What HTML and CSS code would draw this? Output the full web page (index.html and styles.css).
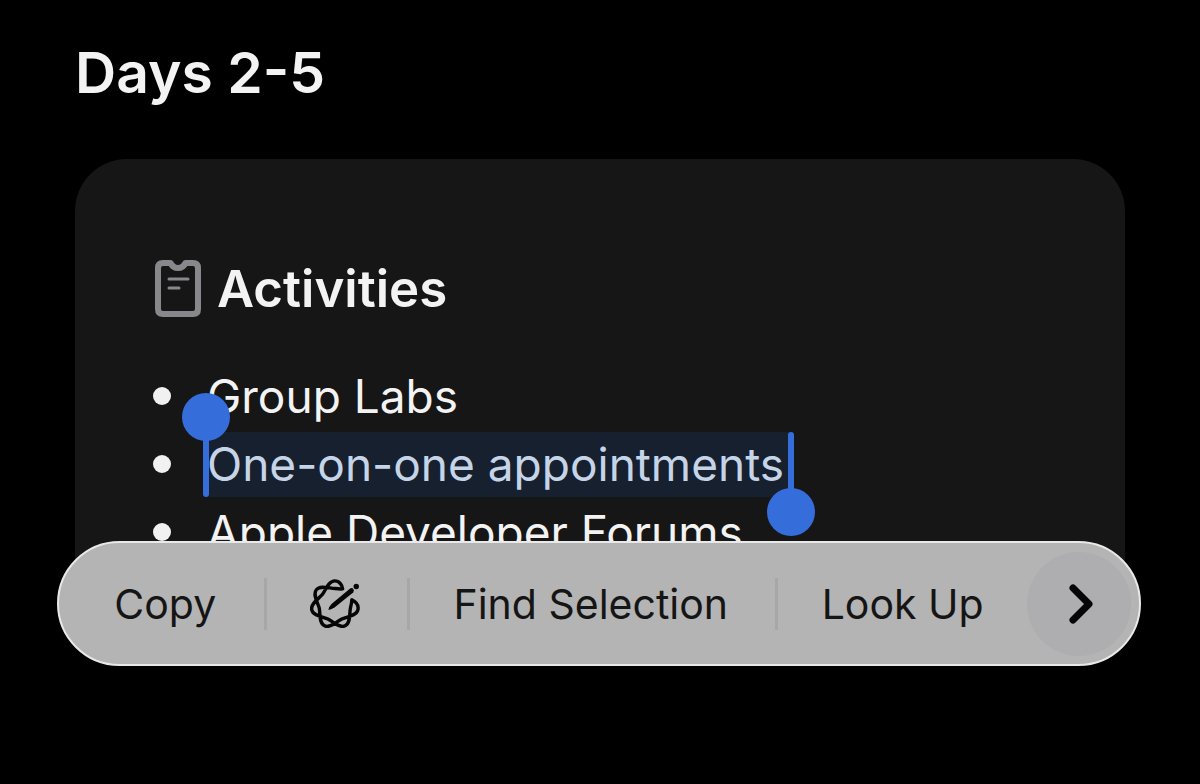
FILE: index.html
```html
<!DOCTYPE html>
<html lang="en">
<head>
<meta charset="utf-8">
<meta name="viewport" content="width=device-width, initial-scale=1">
<title>Days 2-5</title>
<link rel="stylesheet" href="styles.css">
</head>
<body>
<main class="page">
  <h1 class="title">Days 2-5</h1>
  <div class="stage">
    <section class="card" aria-labelledby="activities">
      <header class="card-head">
        <svg class="badge-icon" viewBox="0 0 48 60" aria-hidden="true">
          <path d="M10 4H17.600A8 8 0 0 0 32.400 4H40Q45 4 45 9V50Q45 55 40 55H10Q5 55 5 50V9Q5 4 10 4Z" fill="none" stroke="#88888c" stroke-width="6" stroke-linejoin="round"/>
          <path d="M16 20H35M16 29H26" stroke="#88888c" stroke-width="3" stroke-linecap="round"/>
        </svg>
        <h2 class="card-title" id="activities">Activities</h2>
      </header>
      <ul class="list">
        <li>Group Labs</li>
        <li><mark class="selection">One-on-one appointments<span class="handle handle-start"></span><span class="handle handle-end"></span></mark></li>
        <li>Apple Developer Forums</li>
      </ul>
    </section>
    <div class="menu" role="toolbar" aria-label="Text actions">
      <button class="item" type="button">Copy</button>
      <button class="item" type="button" aria-label="Writing Tools">
        <svg class="tools-icon" viewBox="65 59 147 144" aria-hidden="true">
          <path d="M161 88C160 78 152 64.500 138 64.500C119 64.500 110.500 93 101.200 104.700C91.900 116.400 66 131 70.200 149.500C74.400 168 104.100 169.800 117.600 176.300C131.100 182.800 151.100 204.800 168.200 196.600C185.300 188.400 180.500 159.100 183.800 144.500C186 136 188 128 188 120C196 124 210 131 205.800 149.500C201.600 168 171.900 169.800 158.400 176.300C144.900 182.800 124.900 204.800 107.800 196.600C90.700 188.400 95.500 159.100 92.200 144.500C88.900 129.900 71.900 105.600 83.700 90.700C95.500 75.800 123 87 138 87C146 88 154 89 161 88Z" fill="none" stroke="#060606" stroke-width="10" stroke-linejoin="round"/>
          <path d="M119 150Q119 142 129 132L183 87Q188 84 192 88Q196 93 192 99L137 143Q126 150 119 150Z" fill="#060606"/>
          <circle cx="201" cy="81" r="8" fill="#060606"/>
        </svg>
      </button>
      <button class="item" type="button">Find Selection</button>
      <button class="item" type="button">Look Up</button>
      <button class="more" type="button" aria-label="More">
        <svg class="chevron" viewBox="0 0 24 40" aria-hidden="true"><path d="M4 4L20 20L4 36" fill="none" stroke="#060606" stroke-width="7" stroke-linecap="round" stroke-linejoin="round"/></svg>
      </button>
    </div>
  </div>
</main>
</body>
</html>
```
FILE: styles.css
```css
* { box-sizing: border-box; }

body {
  margin: 0;
  min-height: 100vh;
  background: #000;
  color: #f3f3f3;
  font-family: Inter, "Liberation Sans", sans-serif;
}

.page {
  min-height: 100vh;
  padding: 37px 75px 0;
}

.title {
  margin: 0 0 50px;
  font-size: 57px;
  line-height: 72px;
  font-weight: 600;
}

.stage { position: relative; }

.card {
  padding: 96px 78px 60px;
  border-radius: 52px;
  background: #161616;
}

.card-head {
  display: flex;
  align-items: center;
  gap: 16px;
}

.badge-icon { width: 48px; height: 60px; }

.card-title {
  margin: 0;
  font-size: 51px;
  line-height: 68px;
  font-weight: 600;
}

.list {
  margin: 39px 0 0;
  padding: 0;
  list-style: none;
  font-size: 46px;
  line-height: 65px;
}

.list li {
  display: flex;
  align-items: center;
  gap: 36px;
  height: 68px;
}

.list li::before {
  content: "";
  width: 18px;
  height: 18px;
  border-radius: 50%;
  background: #f1f1f1;
}

.selection {
  position: relative;
  padding-right: 6px;
  background: #16202f;
  color: #c6d4e8;
}

.handle {
  position: absolute;
  top: 0;
  bottom: 0;
  width: 6px;
  border-radius: 3px;
  background: #356edb;
}

.handle::after {
  content: "";
  position: absolute;
  left: -21px;
  width: 48px;
  height: 48px;
  border-radius: 50%;
  background: #356edb;
}

.handle-start { left: -4px; }
.handle-start::after { top: -39px; }
.handle-end { right: -4px; }
.handle-end::after { bottom: -39px; }

.menu {
  position: absolute;
  top: 382px;
  left: -18px;
  right: -16px;
  display: flex;
  align-items: center;
  height: 125px;
  padding: 0 8px 0 12px;
  border: solid #e9e9e9;
  border-width: 2px;
  border-radius: 63px;
  background: #b4b4b4;
}

.item {
  display: flex;
  flex: 1 1 auto;
  align-items: center;
  justify-content: center;
  height: 52px;
  padding: 0 4px 0 0;
  border: 0;
  background: none;
  color: #151515;
  font: inherit;
  font-size: 41px;
  line-height: 52px;
}

.item + .item { border-left: 3px solid #a7a7a7; }

.tools-icon { width: 50px; height: 49px; }

.more {
  display: flex;
  align-items: center;
  justify-content: center;
  width: 104px;
  height: 104px;
  margin-left: -4px;
  padding: 0 0 0 4px;
  border: 0;
  border-radius: 50%;
  background: #aeaeb0;
}

.chevron { width: 24px; height: 40px; }
```
